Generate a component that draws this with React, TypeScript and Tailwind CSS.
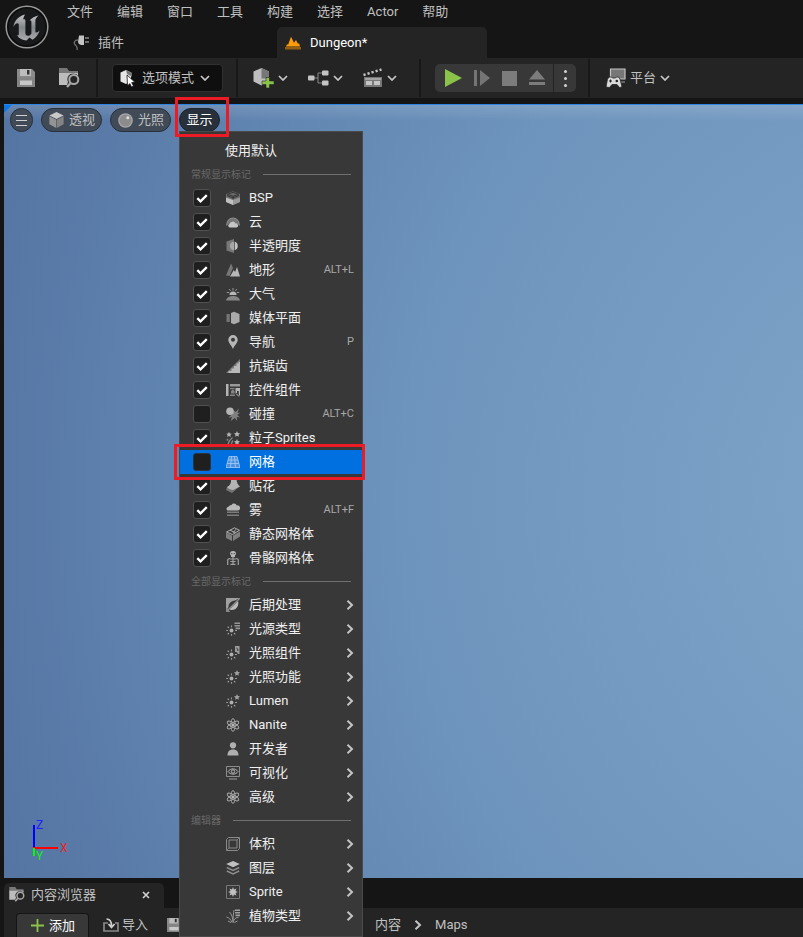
import { useState, type ReactNode } from "react";

const FONT = "font-['Roboto','Noto_Sans_CJK_SC',sans-serif]";

function Icon({ children, className = "size-[14px]" }: { children: ReactNode; className?: string }) {
  return (
    <svg viewBox="0 0 14 14" className={`${className} shrink-0`} fill="none" aria-hidden="true">
      {children}
    </svg>
  );
}

function ChevronDown() {
  return (
    <svg viewBox="0 0 10 6" className="h-[6px] w-[10px] shrink-0" fill="none" aria-hidden="true">
      <path d="M1 1l4 4 4-4" stroke="#c8c8c8" strokeWidth="1.7" />
    </svg>
  );
}

function ChevronRight({ className = "" }: { className?: string }) {
  return (
    <svg viewBox="0 0 8 10" className={`h-[10px] w-2 shrink-0 ${className}`} fill="none" aria-hidden="true">
      <path d="M1.5 0.8L6 5 1.5 9.2" stroke="#c4c4c4" strokeWidth="2" />
    </svg>
  );
}

/* Shared pieces of the light-related icons */
const rays = (
  <>
    <circle cx="5.5" cy="8.5" r="1.9" fill="#b0b0b0" />
    <path
      d="M5.5 3.5v1.7M5.5 12v1.8M.2 8.5h1.9M9 8.5h2M1.7 4.7l1.3 1.3M8 11l1.3 1.3M1.7 12.3L3 11"
      stroke="#9a9a9a"
      strokeWidth="1.1"
    />
  </>
);
const star = <path d="M11 0l.9 1.9 2.1.3-1.5 1.5.3 2.1L11 4.8l-1.900 1 .4-2.100L8 2.200l2.100-.3z" fill="#a0a0a0" />;
const atom = (
  <g stroke="#a8a8a8" strokeWidth="1">
    <ellipse cx="7" cy="7" rx="2.2" ry="6.4" />
    <ellipse cx="7" cy="7" rx="2.2" ry="6.4" transform="rotate(60 7 7)" />
    <ellipse cx="7" cy="7" rx="2.2" ry="6.4" transform="rotate(-60 7 7)" />
    <circle cx="7" cy="7" r="1.5" fill="#b8b8b8" stroke="none" />
  </g>
);

const icons: Record<string, ReactNode> = {
  bsp: (
    <>
      <path d="M7 .3l7 2.700v8L7 14 0 11V3z" fill="#6a6a6a" />
      <path d="M7 1.300l5.500 2L7 5.300l-5.500-2zM1 4.500l6 2.300 6-2.300M7 5.500V8" stroke="#303030" strokeWidth=".9" />
      <path d="M0 6.500L7 9v5L0 11z" fill="#c0c0c0" />
      <path d="M14 6.500L7 9v5l7-3z" fill="#9a9a9a" />
    </>
  ),
  cloud: (
    <>
      <path d="M0 10.500a7 8 0 0 1 14 0h-1.500a5.500 6 0 0 0-11 0z" fill="#8a8a8a" />
      <path d="M1.500 9a5.500 5.500 0 0 1 11 0z" fill="#747474" />
      <path d="M3.800 12.500a1.900 1.900 0 0 1-.2-3.700 2.400 2.400 0 0 1 2-1.800 2.700 2.700 0 0 1 3.800 1.500 2 2 0 0 1 1.200 4z" fill="#c4c4c4" />
    </>
  ),
  translucent: (
    <>
      <path d="M.5 2.500L8 0v14L.5 11.500z" fill="#777" />
      <path d="M8 2.800a4.200 4.200 0 0 0 0 8.400z" fill="#a8a8a8" />
      <path d="M8.700 2.800a4.400 4.400 0 0 1 0 8.400z" fill="#c4c4c4" />
    </>
  ),
  landscape: (
    <>
      <path d="M0 12.500L5 .5l2 4.500L3.500 13z" fill="#777" />
      <path d="M4 13.500L7.800 7l1.300 2L11 4l3 9.500z" fill="#b8b8b8" />
    </>
  ),
  atmosphere: (
    <>
      <path d="M3.500 8a3.500 3.500 0 0 1 7 0z" fill="#b8b8b8" />
      <path d="M7 1v2.500M3.300 2l1.200 1.800M10.700 2L9.500 3.800M.8 5.500h2.400M10.800 5.500h2.400" stroke="#999" />
      <path d="M0 13.500C1 10 4 9 7 9s6 1 7 4.500z" fill="#868686" />
    </>
  ),
  media: (
    <>
      <path d="M.5 3h3.300v8H.5z" fill="#747474" />
      <path d="M5 2l3-1.200 5.500 2.200v8L8 13.200 5 12z" fill="#ababab" />
    </>
  ),
  navigation: (
    <path
      fillRule="evenodd"
      d="M7 0a4.700 4.700 0 0 1 4.700 4.700C11.700 8 8.500 10 7 14 5.500 10 2.300 8 2.300 4.700A4.700 4.700 0 0 1 7 0zm0 2.800a2 2 0 1 0 0 4 2 2 0 0 0 0-4z"
      fill="#b6b6b6"
    />
  ),
  antialias: (
    <>
      <path d="M14 0v14H0z" fill="#777" />
      <path d="M14 3v11H2.500v-2h3V9.500H8V7h2.500V4.500h2V3z" fill="#b8b8b8" />
    </>
  ),
  widget: (
    <>
      <path d="M0 1h2.500v12H0z" fill="#b4b4b4" />
      <path d="M4 1h10v2.500H4z" fill="#999" />
      <path d="M4 5h4.500v1.200H4zM4 11.500h5V13H4zM5 8l2-1.500L8.500 8v2.500H5z" fill="#858585" />
      <path d="M9.500 5H14v7.500h-1.200V8H11v2H9.500z" fill="#b4b4b4" />
      <path d="M10 10.500l3 3" stroke="#b4b4b4" />
    </>
  ),
  collision: (
    <>
      <path d="M8 3.500l1.500 1.500 3.500-3.500-1.500 4.300H14L11.300 8l2.700 2.500-3.200-.5.400 4-2.400-3-4 3 1.200-4-3.500.8L6 7z" fill="#808080" />
      <circle cx="4" cy="4.300" r="3.800" fill="#b4b4b4" />
    </>
  ),
  particles: (
    <>
      <path
        d="M3 .8l.8 1.700 1.900.3-1.300 1.300.3 1.900L3 5.100 1.300 6l.3-1.900L.3 2.800l1.900-.3zM11 0l.9 1.900 2.100.3-1.500 1.500.4 2.100L11 4.800l-1.900 1 .4-2.100L8 2.200l2.100-.3zM11 8l.9 1.900 2.100.3-1.500 1.500.4 2.100-1.900-1-1.900 1 .4-2.100L8 10.200l2.100-.3z"
        fill="#b4b4b4"
      />
      <path d="M2 13.500c.5-3 1.500-4.500 4.500-7M5.500 13c.2-1.500.5-2.300 1.500-3.500M.8 9.500L2 8" stroke="#868686" strokeWidth="1.300" />
    </>
  ),
  grid: (
    <>
      <path d="M3 1.500h8l3 11H0z" fill="#4a90e0" />
      <path d="M3 1.500h8l3 11H0zM2 5h10M1 8.500h12M5.500 1.500l-1 11M8.500 1.500l1 11" stroke="#a6ccf5" strokeWidth=".8" />
    </>
  ),
  decal: (
    <>
      <path d="M1 8l8 1.500L14 7 6 14 0 11z" fill="#747474" />
      <path d="M5 0l5.500.5c.5 4 1.500 5.500 3.500 7L7 11C4 10.500 2 9.500 1 8c3-1.500 4.500-4 4-8z" fill="#b4b4b4" />
    </>
  ),
  fog: (
    <>
      <path d="M1.500 7.500a2 2 0 0 1 1-3.700A3.200 3.200 0 0 1 5.500 2 2.900 2.900 0 0 1 10.700 2.500a2.400 2.400 0 0 1 1.500 5z" fill="#b8b8b8" />
      <path d="M1 9.300h12M1 12.200h12" stroke="#7b7b7b" strokeWidth="1.600" />
    </>
  ),
  staticMesh: (
    <>
      <path d="M0 5.500L6 8.500V14L0 11zM14 4.500L7 8.500V14l7-4.500z" fill="#7e7e7e" />
      <path d="M.5 5L8.500.8l5 2.500-7 4.200zM4 3.200l5.500 2.500M7 5.800l3-3.500" stroke="#b0b0b0" />
    </>
  ),
  skeletalMesh: (
    <>
      <path d="M4 2.500C4 .8 5.300 0 7 0s3 .8 3 2.500c0 1-.4 1.500-1 2V6H5V4.500c-.6-.5-1-1-1-2z" fill="#b8b8b8" />
      <path d="M5.300 2.600h1M7.700 2.600h1" stroke="#383838" strokeWidth="1.200" />
      <path
        d="M7 6v7M4 8h6M4.300 10.500h5.400M4.500 13.300h5M1.700 14V9.500C1.700 8 2.500 7.500 4 7.500M12.300 14V9.500c0-1.500-.8-2-2.300-2"
        stroke="#a0a0a0"
        strokeWidth="1.200"
      />
    </>
  ),
  post: (
    <>
      <path d="M0 0h14L9 2.500C5 3 2.500 5.500 2.500 9L0 13z" fill="#a0a0a0" />
      <path d="M12 3c1.200 4-1 9-6.500 9-1 0-1.500-.3-2-.7z" fill="#bcbcbc" />
      <path d="M14 0L0 14" stroke="#8a8a8a" strokeWidth="1.300" />
      <path d="M0 9.500V14h4.500" fill="#8a8a8a" />
    </>
  ),
  lightType: (
    <>
      {rays}
      <path d="M8.500 1.200H14M8.500 3.800H14M9.500 6.400H14" stroke="#959595" strokeWidth="1.600" />
    </>
  ),
  lightComp: (
    <>
      {rays}
      <path d="M9 0h4.500v8h-1.300L10.500 6H9z" fill="#9c9c9c" />
      <path d="M10.300 2l1.500 1v2" stroke="#383838" />
    </>
  ),
  lightFunc: (
    <>
      {rays}
      {star}
    </>
  ),
  atom,
  developer: (
    <>
      <circle cx="7" cy="3.300" r="3.100" fill="#b0b0b0" />
      <path d="M1.500 13.500c0-4 2-6 5.500-6s5.500 2 5.500 6z" fill="#b0b0b0" />
    </>
  ),
  visualize: (
    <>
      <path d="M.5.500h13v10H.5z" stroke="#8c8c8c" />
      <path d="M2 5.500C4.500 2 9.500 2 12 5.500 9.500 9 4.500 9 2 5.500z" stroke="#b4b4b4" />
      <circle cx="7" cy="5.500" r="1.700" stroke="#b4b4b4" />
      <path d="M3 13h8" stroke="#8c8c8c" strokeWidth="1.200" />
    </>
  ),
  volume: (
    <>
      <path d="M.5 2.500L2.500.5h11v11l-2 2H.5z" stroke="#8a8a8a" />
      <path d="M3 3h8v8H3z" stroke="#8a8a8a" />
      <path d="M.5 13.500L3 11M11 3L13.500.5" stroke="#777" />
    </>
  ),
  layers: (
    <>
      <path d="M7 0l6.800 3L7 6.300.2 3z" fill="#c0c0c0" />
      <path d="M.8 6.500L7 9.500l6.200-3M.8 10L7 13l6.200-3" stroke="#8c8c8c" strokeWidth="1.500" />
    </>
  ),
  sprite: (
    <>
      <path d="M.5.500h13v13H.5z" stroke="#777" />
      <path d="M7 2l1 2.500L10.500 3.500 9.500 6l2.500 1-2.500 1 1 2.500L8 9.500 7 12 6 9.500l-2.500 1 1-2.500L2 7l2.500-1-1-2.500L6 4.500z" fill="#c0c0c0" />
    </>
  ),
  foliage: (
    <>
      <path d="M9 1.200H14M9 3.800H14M9.500 6.400H14" stroke="#a0a0a0" strokeWidth="1.600" />
      <path
        d="M7 13.500C7 9 5.500 5 3.500 3M6 13.500C5 10.500 3 8.500.5 8M7.500 13.500C7.500 10.500 9 8.500 12.500 8.500M5 13.500L2 12M8.500 13.500l3-1.500M7 12c0-4 .5-8 1-11"
        stroke="#969696"
      />
    </>
  ),
};

const flags: { label: string; icon: string; shortcut?: string; off?: boolean }[] = [
  { label: "BSP", icon: "bsp" },
  { label: "云", icon: "cloud" },
  { label: "半透明度", icon: "translucent" },
  { label: "地形", icon: "landscape", shortcut: "ALT+L" },
  { label: "大气", icon: "atmosphere" },
  { label: "媒体平面", icon: "media" },
  { label: "导航", icon: "navigation", shortcut: "P" },
  { label: "抗锯齿", icon: "antialias" },
  { label: "控件组件", icon: "widget" },
  { label: "碰撞", icon: "collision", shortcut: "ALT+C", off: true },
  { label: "粒子Sprites", icon: "particles" },
  { label: "网格", icon: "grid", off: true },
  { label: "贴花", icon: "decal" },
  { label: "雾", icon: "fog", shortcut: "ALT+F" },
  { label: "静态网格体", icon: "staticMesh" },
  { label: "骨骼网格体", icon: "skeletalMesh" },
];

const allFlags = [
  { label: "后期处理", icon: "post" },
  { label: "光源类型", icon: "lightType" },
  { label: "光照组件", icon: "lightComp" },
  { label: "光照功能", icon: "lightFunc" },
  { label: "Lumen", icon: "lightFunc" },
  { label: "Nanite", icon: "atom" },
  { label: "开发者", icon: "developer" },
  { label: "可视化", icon: "visualize" },
  { label: "高级", icon: "atom" },
];

const editorFlags = [
  { label: "体积", icon: "volume" },
  { label: "图层", icon: "layers" },
  { label: "Sprite", icon: "sprite" },
  { label: "植物类型", icon: "foliage" },
];

function FlagRow({ label, icon, shortcut, off }: (typeof flags)[number]) {
  const [on, setOn] = useState(!off);
  const active = icon === "grid";
  return (
    <label
      className={`relative flex h-6 items-center pr-2 pl-[13px] ${active ? "bg-[#0070e0] text-white" : ""}`}
    >
      <span className="grid">
        <input
          type="checkbox"
          checked={on}
          onChange={() => setOn(!on)}
          className={`size-[18px] appearance-none rounded-[3px] border bg-[#1f1f1f] [grid-area:1/1] ${active ? "border-[#2a3442]" : "border-[#505050]"}`}
        />
        {on && (
          <svg viewBox="0 0 18 18" className="pointer-events-none size-[18px] [grid-area:1/1]" fill="none" aria-hidden="true">
            <path d="M4.300 9.200l3.200 3.100 6.300-6.200" stroke="#fff" strokeWidth="2.300" />
          </svg>
        )}
      </span>
      <span className="ml-[15px] flex">
        <Icon>{icons[icon]}</Icon>
      </span>
      <span className="ml-[9px]">{label}</span>
      {shortcut && <span className="ml-auto text-[11px] text-[#a8a8a8]">{shortcut}</span>}
      {active && (
        <span className="pointer-events-none absolute -inset-y-1.5 -right-[3px] -left-1.5 z-10 border-[3px] border-[#ed1c24]" />
      )}
    </label>
  );
}

function SubmenuRow({ label, icon }: { label: string; icon: string }) {
  return (
    <button type="button" className="flex h-6 w-full items-center pr-2 pl-[46px] text-left">
      <Icon>{icons[icon]}</Icon>
      <span className="ml-[9px]">{label}</span>
      <ChevronRight className="ml-auto" />
    </button>
  );
}

function SectionHeading({ children }: { children: ReactNode }) {
  return (
    <h2 className="flex h-[23px] items-center gap-3 px-[11px] text-[10px] text-[#686868]">
      {children}
      <span className="h-px flex-1 bg-[#707070]" />
    </h2>
  );
}

function ShowMenu() {
  return (
    <div className="absolute top-[23px] left-0 z-10 w-[184px] border border-[#4a4a4a] bg-[#383838] pt-[7px] pb-2 text-[#f0f0f0]">
      <button type="button" className="flex h-6 w-full items-center pl-[45px]">
        使用默认
      </button>
      <SectionHeading>常规显示标记</SectionHeading>
      {flags.map((f) => (
        <FlagRow key={f.label} {...f} />
      ))}
      <SectionHeading>全部显示标记</SectionHeading>
      {allFlags.map((f) => (
        <SubmenuRow key={f.label} {...f} />
      ))}
      <SectionHeading>编辑器</SectionHeading>
      {editorFlags.map((f) => (
        <SubmenuRow key={f.label} {...f} />
      ))}
    </div>
  );
}

function UnrealLogo() {
  return (
    <svg viewBox="0 0 44 44" className="size-[44px] shrink-0" aria-label="Unreal Engine" role="img">
      <defs>
        <linearGradient id="metal" x1="0" y1="0" x2="0" y2="1">
          <stop offset="0" stopColor="#c4c6c8" />
          <stop offset="0.5" stopColor="#84878a" />
          <stop offset="1" stopColor="#a8aaac" />
        </linearGradient>
      </defs>
      <circle cx="22" cy="22" r="20.800" fill="#0b0b0b" stroke="#999" strokeWidth="1.500" />
      <circle cx="22" cy="22" r="18.500" fill="#17191a" />
      <path
        fill="url(#metal)"
        d="M20 9.500C13 11.500 9 16 8.500 22c1-2.200 2.500-3.800 4-3.800 1 0 1.300.7 1.300 1.800v9.200c0 1-.5 1.300-1.800 1 2 3.200 5.500 5 9.500 5.200l3-2.900 3 2.200c3.500-2 6-5.200 7.200-9.200-1.200 1.200-2.400 2-3.300 2-.8 0-1-.4-1-1.300V15.500c0-1.500 1.200-3.300 3.200-5-3.600.5-6.800 2.500-9.100 5 1.200-.3 1.900.2 1.900 1.300v11.700c-.9 1.500-2 2.300-3.400 2.300-1.600 0-2.600-1-2.600-2.500V15.500c0-1.100-.9-1.500-2.300-1.200.4-1.800 1-3.400 1.900-4.800z"
      />
    </svg>
  );
}

function FolderSearch({ className }: { className: string }) {
  return (
    <svg viewBox="0 0 22 20" className={`${className} shrink-0`} fill="none" aria-hidden="true">
      <path d="M0 0h8l2 3h9v3H0z" fill="#777" />
      <path d="M0 5h19v2.500A6 6 0 0 0 9 14l-1 3H0z" fill="#bdbdbd" />
      <circle cx="14.800" cy="11.500" r="4.500" fill="#242424" stroke="#a8a8a8" strokeWidth="2" />
      <path d="M11.500 15L8 19" stroke="#a8a8a8" strokeWidth="2.400" />
    </svg>
  );
}

function SaveIcon({ className }: { className: string }) {
  return (
    <svg viewBox="0 0 18 18" className={`${className} shrink-0`} fill="none" aria-hidden="true">
      <path d="M0 0h15l3 3v6H0z" fill="#8a8a8a" />
      <path d="M3 0h11v7H3z" fill="#bcbcbc" />
      <path d="M10 1h2.500v4.500H10z" fill="#333" />
      <path d="M0 8h18v10H0z" fill="#848484" />
      <path d="M3 11.500h12V16H3z" fill="#c8c8c8" />
    </svg>
  );
}

function Cube({ className }: { className: string }) {
  return (
    <svg viewBox="0 0 16 18" className={`${className} shrink-0`} aria-hidden="true">
      <path d="M8 0l8 3.800L8 8 0 3.800z" fill="#c8c8c8" />
      <path d="M0 4.800L7.700 8.800V18L0 13.800z" fill="#949494" />
      <path d="M16 4.800L8.300 8.800V18l7.700-4.200z" fill="#848484" />
    </svg>
  );
}

function Divider() {
  return <span className="h-[38px] w-[2px] shrink-0 bg-[#181818]" />;
}

const menus = ["文件", "编辑", "窗口", "工具", "构建", "选择", "Actor", "帮助"];

function Header() {
  return (
    <header className="flex h-[58px] shrink-0 bg-[#151515] pl-[5px]">
      <div className="pt-[5px]">
        <UnrealLogo />
      </div>
      <div className="flex flex-1 flex-col justify-between pt-[2px]">
        <nav className="flex h-5 items-center gap-6 pl-[18px]">
          {menus.map((m) => (
            <button type="button" key={m}>
              {m}
            </button>
          ))}
        </nav>
        <div className="flex h-[31px]">
          <a href="#plugins" className="flex w-[228px] items-center gap-2 pl-6">
            <svg viewBox="0 0 17 16" className="h-4 w-[17px]" fill="none" aria-hidden="true">
              <path d="M6 .5h5v9.500H8A3.500 3.500 0 0 1 5 7z" fill="#c4c4c4" />
              <path d="M12 3h4M12 7h4" stroke="#888" strokeWidth="1.600" />
              <path d="M5 5C1.500 5 .5 7.500 2 9.500s3 2.500 2 5.500" stroke="#6c6c6c" strokeWidth="1.400" />
            </svg>
            插件
          </a>
          <a href="#dungeon" className="flex w-[210px] items-center gap-[9px] rounded-t-[5px] bg-[#242424] pl-2 text-white">
            <svg viewBox="0 0 16 14" className="h-[14px] w-4" aria-hidden="true">
              <path d="M0 11h16v2.500H0z" fill="#94600f" />
              <path d="M1 10.500l1.200-2.500.8 1L6 .8l3 6L11 4l2 4 1-1 1 3.500z" fill="#ff9c0a" />
            </svg>
            Dungeon*
          </a>
        </div>
      </div>
    </header>
  );
}

function Toolbar() {
  return (
    <div className="flex h-10 shrink-0 items-center bg-[#242424]">
      <div className="flex w-24 items-center gap-6 pl-[17px]">
        <button type="button" aria-label="保存">
          <SaveIcon className="size-[18px]" />
        </button>
        <button type="button" aria-label="浏览">
          <FolderSearch className="h-5 w-[22px]" />
        </button>
      </div>
      <Divider />
      <div className="flex w-[138px] pl-[14px]">
        <button type="button" className="flex h-7 items-center gap-[6px] rounded-[4px] border border-[#303030] bg-[#0f0f0f] pr-3 pl-[7px]">
          <svg viewBox="0 0 16 18" className="h-[18px] w-4" aria-hidden="true">
            <path d="M6 1l5 2.500v9L6 15l-5.500-2.500v-9z" fill="#e6e6e6" />
            <path d="M6 1l6 2.700v4L7 5z" fill="#777" />
            <path d="M7 6l8 7.300-3.300.3 1.800 3.300-2 1-1.700-3.300L7.500 17z" fill="#fff" stroke="#0f0f0f" strokeWidth=".8" />
          </svg>
          <span>选项模式</span>
          <ChevronDown />
        </button>
      </div>
      <Divider />
      <div className="flex w-[181px] items-center gap-5 pl-[15px]">
        <button type="button" aria-label="添加" className="flex items-center gap-1">
          <svg viewBox="0 0 21 20" className="h-5 w-[21px]" aria-hidden="true">
            <path d="M8.500 0l7.500 3.500v8L8.500 17.500.500 13.500v-10z" fill="#bdbdbd" />
            <path d="M8.500 0L16 3.500v7H8.500V6z" fill="#777" />
            <path d="M13 9.500h3.500V13H21v3.500h-4.500V20H13v-3.500H9V13h4z" fill="#8bc34a" stroke="#242424" strokeWidth=".6" />
          </svg>
          <ChevronDown />
        </button>
        <button type="button" aria-label="蓝图" className="flex items-center gap-1">
          <svg viewBox="0 0 21 18" className="h-[18px] w-[21px]" fill="none" aria-hidden="true">
            <path d="M6 9h4M15 4h-5v10h5" stroke="#888" />
            <rect y="6.500" width="6.500" height="5" rx="1" fill="#c4c4c4" />
            <rect x="14" y="1.500" width="6.500" height="5" rx="1" fill="#c4c4c4" />
            <rect x="14" y="11.500" width="6.500" height="5" rx="1" fill="#c4c4c4" />
          </svg>
          <ChevronDown />
        </button>
        <button type="button" aria-label="过场动画" className="flex items-center gap-1">
          <svg viewBox="0 0 20 20" className="size-5" fill="none" aria-hidden="true">
            <path d="M.5 7L18.500 1.500" stroke="#c4c4c4" strokeWidth="2.500" strokeDasharray="2.200 2" />
            <path d="M1 9h18v10H1z" fill="#777" />
            <path d="M3 13h6v4H3zM11 13h6v4h-6z" fill="#c4c4c4" />
            <path d="M2 11h16" stroke="#d0d0d0" />
          </svg>
          <ChevronDown />
        </button>
      </div>
      <Divider />
      <div className="flex w-[167px] pl-[14px]">
        <div className="flex h-7 overflow-hidden rounded-[5px] bg-[#383838]">
          <div className="flex w-[119px] items-center gap-3 border-r border-[#242424] pl-[10px]">
            <button type="button" aria-label="播放">
              <svg viewBox="0 0 17 18" className="h-[18px] w-[17px]" aria-hidden="true">
                <path d="M0 0l17 9-17 9z" fill="#8bc34a" />
              </svg>
            </button>
            <button type="button" aria-label="跳帧">
              <svg viewBox="0 0 16 16" className="size-4" aria-hidden="true">
                <path d="M0 0h3v16H0zM6 0l10 8-10 8z" fill="#757575" />
              </svg>
            </button>
            <button type="button" aria-label="停止" className="size-[15px] bg-[#7c7c7c]" />
            <button type="button" aria-label="弹出">
              <svg viewBox="0 0 16 16" className="size-4" aria-hidden="true">
                <path d="M8 0l8 9.500H0zM0 12h16v3H0z" fill="#7c7c7c" />
              </svg>
            </button>
          </div>
          <button type="button" aria-label="更多" className="flex w-[22px] flex-col items-center justify-center gap-1">
            <span className="size-[3px] rounded-full bg-[#d0d0d0]" />
            <span className="size-[3px] rounded-full bg-[#d0d0d0]" />
            <span className="size-[3px] rounded-full bg-[#d0d0d0]" />
          </button>
        </div>
      </div>
      <Divider />
      <button type="button" className="ml-4 flex items-center gap-1">
        <svg viewBox="0 0 20 20" className="size-5" fill="none" aria-hidden="true">
          <path d="M4.500 1h14.500v10H4.500z" fill="#777" stroke="#c4c4c4" strokeWidth="1.200" />
          <path d="M14 14h5" stroke="#777" strokeWidth="1.500" />
          <path d="M3.500 9h2l1 1h3l1-1h2l1.500 2 2 8-2.500.5-2.500-3h-5l-2.500 3L0 19l1.500-8z" fill="#dadada" stroke="#242424" strokeWidth=".8" />
          <path d="M3 13h3M4.500 11.500v3" stroke="#242424" />
          <circle cx="10.800" cy="13" r="1.300" fill="#242424" />
        </svg>
        <span>平台</span>
        <ChevronDown />
      </button>
    </div>
  );
}

const pill = "flex h-6 items-center rounded-full border border-[#27303b] bg-[#414b58] text-[#c0c0c0]";

function Viewport() {
  return (
    <main className="ml-1 flex-1 border-t border-[#2b86e3] bg-[linear-gradient(180deg,rgba(255,255,255,0.13),rgba(255,255,255,0)_16px),radial-gradient(circle_at_125%_51%,#7ca1c6_200px,#759ac2_430px,#6d94bc_600px,#6186b1_820px,#5878a6_1000px,#5474a1_1080px)]">
      <div className="flex h-full flex-col justify-between">
        <div className="relative flex gap-2 pt-[3px] pl-1.5">
          <svg viewBox="0 0 8 8" className="absolute top-0 left-0 size-2" aria-hidden="true">
            <path d="M0 0h8L0 8z" fill="#0b78e8" />
          </svg>
          <button type="button" aria-label="视口选项" className={`${pill} w-[23px] flex-col items-center justify-center gap-1`}>
            <span className="h-px w-[11px] bg-[#d0d0d0]" />
            <span className="h-px w-[11px] bg-[#d0d0d0]" />
            <span className="h-px w-[11px] bg-[#d0d0d0]" />
          </button>
          <button type="button" className={`${pill} w-[61px] gap-[5px] pl-[7px]`}>
            <Cube className="h-4 w-[15px]" />
            透视
          </button>
          <button type="button" className={`${pill} w-[61px] gap-[5px] pl-[7px]`}>
            <svg viewBox="0 0 15 15" className="size-[15px] shrink-0" aria-hidden="true">
              <circle cx="7.500" cy="7.500" r="7.300" fill="#a8a8a8" />
              <circle cx="7.500" cy="7.500" r="6" fill="#8c8c8c" />
              <circle cx="9.800" cy="4.800" r="1.500" fill="#e0e0e0" />
            </svg>
            光照
          </button>
          <div className="relative">
            <button type="button" className="flex h-6 w-[41px] items-center justify-center rounded-full border border-[#1b242f] bg-[#27303b] text-white">
              显示
            </button>
            <ShowMenu />
            <span className="pointer-events-none absolute -top-[11px] -left-1 z-20 h-10 w-[54px] border-[3px] border-[#ed1c24]" />
          </div>
        </div>
        <svg viewBox="0 0 44 54" className="mb-[10px] ml-[26px] h-[54px] w-11" aria-label="坐标轴" role="img">
          <path d="M4 11v24" stroke="#00f" strokeWidth="2" />
          <path d="M3 34h25" stroke="#f00" strokeWidth="2" />
          <path d="M4 34v8" stroke="#0f0" strokeWidth="2" />
          <g className="font-['Roboto',sans-serif] text-[12px]">
            <text x="6" y="15" fill="#22f">Z</text>
            <text x="30" y="38" fill="#e22">X</text>
            <text x="6" y="46" fill="#1e1">Y</text>
          </g>
        </svg>
      </div>
    </main>
  );
}

function ContentBrowser() {
  return (
    <footer className="shrink-0 overflow-hidden bg-[#151515] pt-[5px] pl-1">
      <div className="flex h-[25px] w-40 items-center rounded-t-[5px] bg-[#242424] pr-[14px] pb-[2px] pl-[5px]">
        <FolderSearch className="h-[15px] w-[17px]" />
        <span className="ml-[5px]">内容浏览器</span>
        <button type="button" aria-label="关闭" className="ml-auto">
          <svg viewBox="0 0 8 8" className="size-2" aria-hidden="true">
            <path d="M1 1l6 6M7 1L1 7" stroke="#d0d0d0" strokeWidth="1.700" />
          </svg>
        </button>
      </div>
      <div className="flex h-[29px] items-start bg-[#242424] pt-[5px] pl-3">
        <button type="button" className="flex h-6 w-[73px] items-center gap-[5px] rounded-t-[4px] border border-b-0 border-[#151515] bg-[#383838] pl-[14px] text-white">
          <svg viewBox="0 0 13 13" className="size-[13px]" aria-hidden="true">
            <path d="M6.500 0v13M0 6.500h13" stroke="#8bc34a" strokeWidth="1.800" />
          </svg>
          添加
        </button>
        <button type="button" className="ml-[14px] flex h-6 items-center gap-[3px]">
          <svg viewBox="0 0 16 14" className="h-[14px] w-4" fill="none" aria-hidden="true">
            <path d="M5 5H1v8h14V5h-3" stroke="#888" strokeWidth="1.700" />
            <path d="M3.500 1C7 1 8.500 3 8.500 8M5.500 6l3 3.500 3-3.500" stroke="#d0d0d0" strokeWidth="1.700" />
          </svg>
          导入
        </button>
        <button type="button" aria-label="保存所有" className="ml-[19px] flex h-6 items-center">
          <SaveIcon className="size-[14px]" />
        </button>
        <nav className="ml-[194px] flex h-6 items-center gap-[13px]">
          <a href="#content">内容</a>
          <ChevronRight />
          <a href="#maps">Maps</a>
        </nav>
      </div>
    </footer>
  );
}

export default function App() {
  return (
    <div className={`${FONT} flex h-screen flex-col overflow-hidden bg-[#151515] text-[13px] leading-5 text-[#c0c0c0]`}>
      <Header />
      <Toolbar />
      <div className="h-[6px] shrink-0" />
      <Viewport />
      <ContentBrowser />
    </div>
  );
}
